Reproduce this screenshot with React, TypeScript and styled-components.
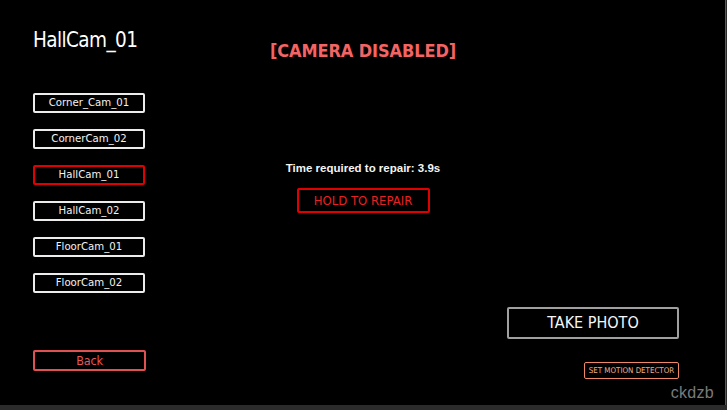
import React from "react";
import styled, { createGlobalStyle } from "styled-components";

const Global = createGlobalStyle`
  html, body { margin: 0; padding: 0; background: #2b2b2b; }
  body { width: 727px; height: 410px; overflow: hidden; }
`;

const font = `"DejaVu Sans Condensed", "Liberation Sans", sans-serif`;

const Frame = styled.div`
  width: 727px;
  height: 410px;
  display: flex;
  flex-direction: column;
  background: #2b2b2b;
`;

const Screen = styled.div`
  position: relative;
  width: 725px;
  height: 405px;
  background: #000;
  border-right: 1px solid #5a5a5a;
  display: grid;
  grid-template: 1fr / 1fr;
  font-family: ${font};
  color: #f2f2f2;
`;

const Layer = styled.div`
  grid-area: 1 / 1;
  display: flex;
  flex-direction: column;
  min-height: 0;
`;

const Sidebar = styled(Layer)`
  padding: 29px 0 34px 33px;
  align-items: flex-start;
`;

const Title = styled.h1`
  margin: 0;
  font-family: ${font};
  font-weight: 400;
  font-size: 20.5px;
  line-height: 22px;
  letter-spacing: -0.6px;
  color: #fff;
`;

const CamList = styled.div`
  margin-top: 42px;
  display: flex;
  flex-direction: column;
  gap: 16px;
`;

const CamButton = styled.button<{ $active?: boolean }>`
  box-sizing: border-box;
  width: 112px;
  height: 20px;
  padding: 0;
  background: #000;
  border: 2px solid ${(p) => (p.$active ? "#e00000" : "#ececec")};
  border-radius: 2px;
  color: #f2f2f2;
  font-family: ${font};
  font-size: 11.3px;
  line-height: 16px;
  text-align: center;
  white-space: nowrap;
`;

const BackButton = styled.button`
  box-sizing: border-box;
  margin-top: auto;
  width: 113px;
  height: 21px;
  padding: 0;
  background: #000;
  border: 2px solid #e05252;
  border-radius: 2px;
  color: #e65858;
  font-family: ${font};
  font-size: 12.5px;
  letter-spacing: -0.2px;
  line-height: 17px;
  text-align: center;
`;

const Center = styled(Layer)`
  align-items: center;
  padding-top: 41px;
  padding-left: 1px;
`;

const Status = styled.div`
  font-family: ${font};
  font-weight: 700;
  font-size: 18px;
  line-height: 20px;
  letter-spacing: -0.1px;
  color: #f36464;
`;

const RepairInfo = styled.div`
  margin-top: 100px;
  font-family: "Liberation Sans", sans-serif;
  font-weight: 700;
  font-size: 11.5px;
  line-height: 14px;
  color: #f4f4f4;
`;

const RepairButton = styled.button`
  box-sizing: border-box;
  margin-top: 13px;
  width: 133px;
  height: 25px;
  padding: 0;
  background: #000;
  border: 2px solid #e00000;
  border-radius: 2px;
  color: #e82222;
  font-family: ${font};
  font-size: 13px;
  line-height: 19px;
  text-align: center;
`;

const Actions = styled(Layer)`
  align-items: flex-end;
  justify-content: flex-end;
  padding: 0 46px 26px 0;
`;

const PhotoButton = styled.button`
  box-sizing: border-box;
  width: 172px;
  height: 32px;
  padding: 0;
  background: #000;
  border: 2px solid #a0a0a0;
  border-radius: 2px;
  color: #f6f6f6;
  font-family: ${font};
  font-size: 16px;
  line-height: 26px;
  text-align: center;
`;

const MotionButton = styled.button`
  box-sizing: border-box;
  margin-top: 23px;
  width: 95px;
  height: 17px;
  padding: 0;
  background: #000;
  border: 1.5px solid #f08868;
  border-radius: 2px;
  color: #f0b08c;
  font-family: ${font};
  font-size: 7.9px;
  line-height: 13px;
  text-align: center;
  white-space: nowrap;
`;

const Watermark = styled.div`
  position: absolute;
  right: 11px;
  bottom: 2px;
  font-family: "Liberation Sans", "DejaVu Sans", sans-serif;
  font-size: 16px;
  line-height: 20px;
  color: #7a7a7a;
  letter-spacing: 0.3px;
`;

const cams = [
  "Corner_Cam_01",
  "CornerCam_02",
  "HallCam_01",
  "HallCam_02",
  "FloorCam_01",
  "FloorCam_02",
];

export default function App() {
  const current = "HallCam_01";
  return (
    <Frame>
      <Global />
      <Screen>
        <Sidebar>
          <Title>{current}</Title>
          <CamList>
            {cams.map((c) => (
              <CamButton key={c} $active={c === current}>
                {c}
              </CamButton>
            ))}
          </CamList>
          <BackButton>Back</BackButton>
        </Sidebar>
        <Center>
          <Status>[CAMERA DISABLED]</Status>
          <RepairInfo>Time required to repair: 3.9s</RepairInfo>
          <RepairButton>HOLD TO REPAIR</RepairButton>
        </Center>
        <Actions>
          <PhotoButton>TAKE PHOTO</PhotoButton>
          <MotionButton>SET MOTION DETECTOR</MotionButton>
        </Actions>
        <Watermark>ckdzb</Watermark>
      </Screen>
    </Frame>
  );
}
